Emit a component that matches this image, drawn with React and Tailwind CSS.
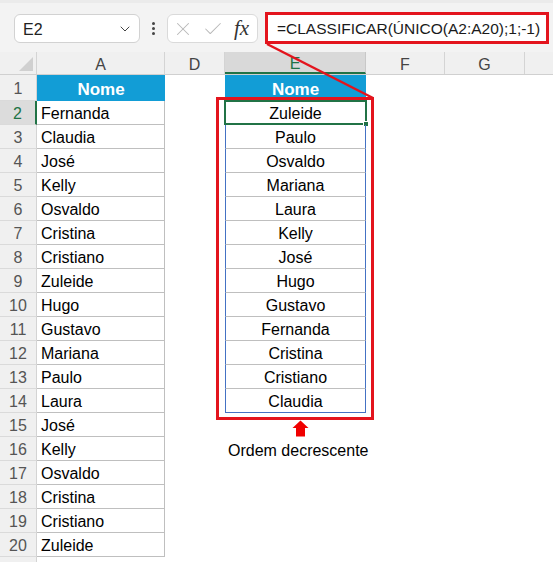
import { ChevronDown, X, Check } from 'lucide-react'

const LEFT = ['Fernanda', 'Claudia', 'José', 'Kelly', 'Osvaldo', 'Cristina', 'Cristiano', 'Zuleide', 'Hugo', 'Gustavo', 'Mariana', 'Paulo', 'Laura', 'José', 'Kelly', 'Osvaldo', 'Cristina', 'Cristiano', 'Zuleide']
const RIGHT = ['Zuleide', 'Paulo', 'Osvaldo', 'Mariana', 'Laura', 'Kelly', 'José', 'Hugo', 'Gustavo', 'Fernanda', 'Cristina', 'Cristiano', 'Claudia']

function Row({ n, a, e }) {
  const sel = n === 2
  const last = n === 14
  return (
    <div className="flex h-6 shrink-0">
      <div className={`w-[37px] shrink-0 flex items-center justify-center pt-[3px] border-b border-b-[#dadada] ${sel ? 'bg-[#dcdcdc] text-[#217346] border-r-2 border-r-[#217346]' : 'bg-[#f0f0f0] text-[#555] border-r border-r-[#d4d4d4]'}`}>{n}</div>
      <div className="w-[128px] shrink-0 flex items-center pl-1 pt-[3px] border-r border-b border-[#bfbfbf] text-black">{a}</div>
      <div className="w-[60px] shrink-0" />
      {e ? (
        <div className={`relative w-[141px] shrink-0 flex items-center justify-center pt-[3px] border-l border-r border-l-[#4472c4] border-r-[#4472c4] border-b ${last ? 'border-b-[#4472c4]' : 'border-b-[#bfbfbf]'} text-black`}>
          {e}
          {sel && (
            <>
              <div className="absolute -left-[2px] -top-[1px] -right-[2px] -bottom-[1px] border-2 border-[#217346]" />
              <div className="absolute -right-[4px] -bottom-[3px] w-[6px] h-[6px] bg-[#217346] border border-white" />
            </>
          )}
        </div>
      ) : (
        <div className="w-[141px] shrink-0" />
      )}
      <div className="flex-1" />
    </div>
  )
}

export default function App() {
  return (
    <div className="relative w-[553px] h-[562px] overflow-hidden bg-white text-[16px] leading-none" style={{ fontFamily: '"Liberation Sans", Arial, sans-serif' }}>
      {/* toolbar */}
      <div className="flex h-[52px] bg-[#f3f3f3] border-t-[3px] border-t-[#ebebeb]">
        <div className="ml-[14px] mt-[11px] w-[126px] h-[29px] rounded-md border border-[#d2d2d2] bg-white flex items-center justify-between pl-[8px] pr-[6px] text-[#222]">
          <span className="pt-[2px]">E2</span>
          <ChevronDown size={16} strokeWidth={1.5} className="text-[#444]" />
        </div>
        <div className="w-[27px] h-[29px] mt-[11px] flex flex-col items-center justify-center gap-[2px]">
          <div className="w-[3px] h-[3px] rounded-full bg-[#444]" />
          <div className="w-[3px] h-[3px] rounded-full bg-[#444]" />
          <div className="w-[3px] h-[3px] rounded-full bg-[#444]" />
        </div>
        <div className="mt-[11px] w-[91px] h-[29px] rounded-md border border-[#dadada] bg-white flex items-center pl-[4px]">
          <X size={22} strokeWidth={1.1} className="text-[#b8b8b8]" />
          <Check size={22} strokeWidth={1.1} className="ml-[8px] text-[#b8b8b8]" />
          <span className="ml-[10px] text-[21px] italic text-[#333]" style={{ fontFamily: '"Liberation Serif", serif' }}>fx</span>
        </div>
        <div className="ml-[7px] mt-[9px] w-[284px] h-[32px] border-[3px] border-[#e3141d] bg-white flex items-center pl-[9px] pt-[2px] text-[15.5px] text-[#1a1a1a]">
          =CLASSIFICAR(ÚNICO(A2:A20);1;-1)
        </div>
      </div>

      {/* column header */}
      <div className="flex h-[23px] bg-[#f0f0f0] border-b border-b-[#d0d0d0] text-[#444]">
        <div className="w-[37px] shrink-0 relative border-r border-r-[#d4d4d4]">
          <div className="absolute right-[3px] bottom-[3px] w-0 h-0 border-l-[14px] border-l-transparent border-b-[14px] border-b-[#d0d0d0]" />
        </div>
        <div className="w-[128px] shrink-0 flex items-center justify-center pt-[3px] border-r border-r-[#d4d4d4]">A</div>
        <div className="w-[60px] shrink-0 flex items-center justify-center pt-[3px] border-r border-r-[#d4d4d4]">D</div>
        <div className="w-[141px] shrink-0 flex items-center justify-center pt-[3px] bg-[#d9d9d9] border-r border-r-[#c8c8c8] border-b-2 border-b-[#217346] text-[#217346]">E</div>
        <div className="w-[79px] shrink-0 flex items-center justify-center pt-[3px] border-r border-r-[#d4d4d4]">F</div>
        <div className="w-[80px] shrink-0 flex items-center justify-center pt-[3px] border-r border-r-[#d4d4d4]">G</div>
        <div className="flex-1" />
      </div>

      {/* row 1 */}
      <div className="flex h-[26px]">
        <div className="w-[37px] shrink-0 flex items-center justify-center pt-[3px] bg-[#f0f0f0] text-[#555] border-r border-r-[#d4d4d4] border-b border-b-[#dadada]">1</div>
        <div className="w-[128px] shrink-0 flex items-center justify-center pt-[2px] bg-[#129dd6] text-white font-bold text-[17px]">Nome</div>
        <div className="w-[60px] shrink-0" />
        <div className="w-[141px] shrink-0 flex items-center justify-center pt-[2px] bg-[#129dd6] text-white font-bold text-[17px]">Nome</div>
        <div className="flex-1" />
      </div>

      {LEFT.map((a, i) => (
        <Row key={i} n={i + 2} a={a} e={RIGHT[i]} />
      ))}
      <div className="flex h-6">
        <div className="w-[37px] shrink-0 bg-[#f0f0f0] border-r border-r-[#d4d4d4]" />
      </div>

      {/* annotations */}
      <svg className="absolute left-0 top-0 pointer-events-none" width="553" height="562">
        <line x1="267" y1="44" x2="373" y2="98" stroke="#e3141d" strokeWidth="2.5" />
        <polygon points="292.5,428 300.5,420.5 308.5,428" fill="#f00000" />
        <rect x="296" y="427.5" width="9" height="9" fill="#f00000" />
      </svg>
      <div className="absolute left-[216px] top-[97px] w-[158px] h-[323px] border-[3px] border-[#e3141d]" />
      <div className="absolute left-[228px] top-[443px] text-[16px] text-black">Ordem decrescente</div>
    </div>
  )
}
